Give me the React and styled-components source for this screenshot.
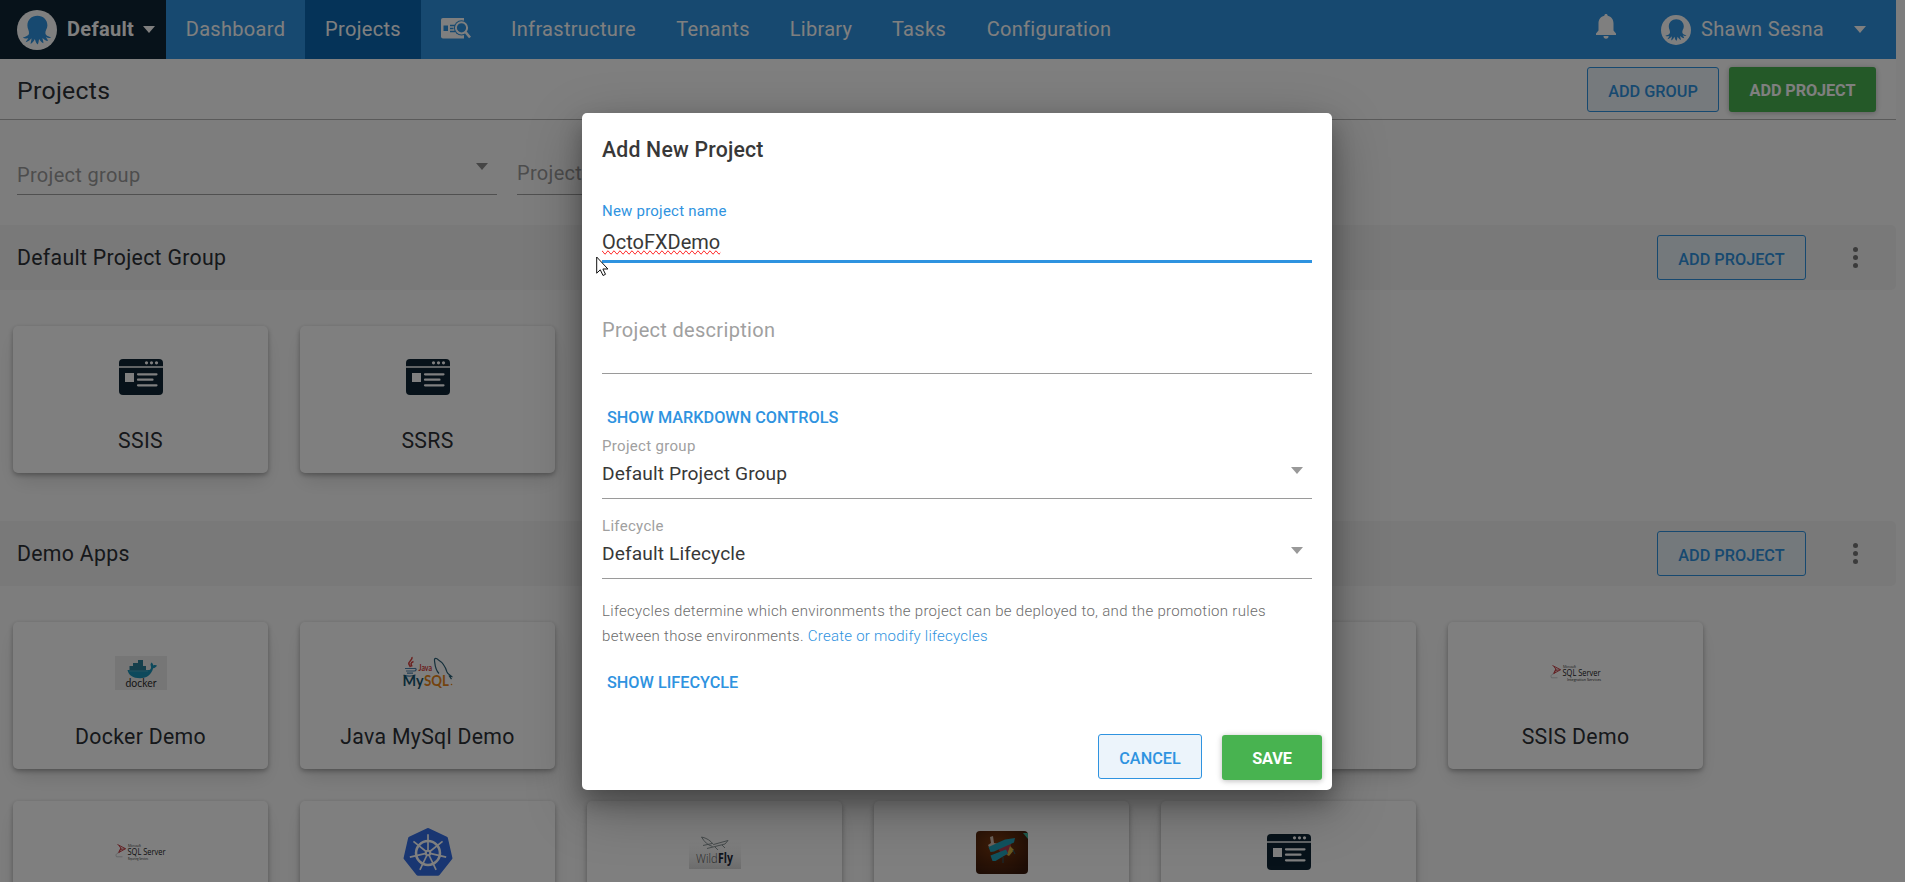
import React from 'react';
import styled, { createGlobalStyle, css } from 'styled-components';

const blue = '#2f93e0';
const green = '#48b350';
const navy = '#0f2535';

const GlobalStyle = createGlobalStyle`
  * { box-sizing: border-box; }
  body {
    margin: 0;
    background: #fbfbfb;
    color: #2c3036;
    font-family: Roboto, "Liberation Sans", sans-serif;
    letter-spacing: 0.31px;
    overflow: hidden;
  }
`;

const Screen = styled.div`
  position: relative;
  height: 882px;
  overflow: hidden;
`;

const Page = styled.div`
  width: 1896px;
  height: 882px;
  overflow: hidden;
`;

/* ---------- navigation ---------- */

const NavBar = styled.nav`
  display: flex;
  height: 59px;
  background: ${blue};
  color: #fff;
  font-size: 20px;
  font-weight: 450;
  box-shadow: 0 1px 0 rgba(47, 110, 160, 0.5);
`;

const SpaceSwitcher = styled.div`
  display: flex;
  align-items: center;
  width: 166px;
  padding-left: 17px;
  background: ${navy};
`;

const SpaceName = styled.span`
  margin: 0 9px 1px 10px;
  font-weight: 700;
`;

const NavItem = styled.a`
  display: flex;
  align-items: center;
  justify-content: center;
  width: ${(p) => p.$width}px;
  padding-bottom: 2px;
  background: ${(p) => (p.$active ? '#0a67b1' : 'transparent')};
`;

const NavEnd = styled.div`
  display: flex;
  align-items: center;
  margin-left: auto;
  padding-right: 30px;
`;

const UserName = styled.span`
  margin: 0 30px 2px 10px;
`;

const BellWrap = styled.span`
  display: flex;
  margin: 0 45px 6px 0;
`;

const Caret = styled.span`
  width: 0;
  height: 0;
  border: 6.5px solid transparent;
  border-top: 7px solid ${(p) => p.$color || '#fff'};
  border-bottom: 0;
`;

/* ---------- buttons ---------- */

const Button = styled.button`
  width: ${(p) => p.$width}px;
  height: 45px;
  padding: 4px 0 0;
  border: 1px solid ${blue};
  border-radius: 3px;
  background: ${(p) => p.$tint || '#ecf4fb'};
  color: ${blue};
  font: 500 16.25px Roboto, sans-serif;
  letter-spacing: 0;
  ${(p) =>
    p.$filled &&
    css`
      padding-top: 2px;
      border: 0;
      background: ${green};
      color: #fff;
      font-weight: 700;
      letter-spacing: -0.1px;
      box-shadow: 0 1px 7px rgba(0, 0, 0, 0.14), 0 1px 5px rgba(0, 0, 0, 0.14);
    `}
`;

/* ---------- page content ---------- */

const PageHeader = styled.header`
  display: flex;
  align-items: center;
  gap: 10px;
  height: 61px;
  padding: 0 20px 0 17px;
  border-bottom: 1px solid #b4b4b4;
  background: #fff;
`;

const PageTitle = styled.h1`
  margin: 0 auto 0 0;
  padding-top: 2px;
  font-size: 24.8px;
  font-weight: 400;
`;

const Filters = styled.div`
  display: flex;
  gap: 20px;
  height: 105px;
  padding: 0 17px;
`;

const FilterField = styled.div`
  display: flex;
  justify-content: space-between;
  align-items: flex-start;
  width: 480px;
  height: 75px;
  padding: ${(p) => p.$top}px 9px 0 0;
  border-bottom: 1px solid #a0a0a0;
  color: #9b9b9b;
  font-size: 20px;
  line-height: 26px;
`;

const FilterCaret = styled(Caret)`
  margin-top: 1px;
`;

const GroupHeader = styled.div`
  display: flex;
  align-items: center;
  height: 65px;
  padding: 0 38px 0 17px;
  border-radius: 0 5px 5px 0;
  background: #f2f2f2;
`;

const GroupName = styled.h2`
  margin: 0 auto 0 0;
  font-size: 21.25px;
  font-weight: 400;
`;

const Dots = styled.span`
  display: grid;
  gap: 2.6px;
  margin-left: 47px;
  i {
    width: 5px;
    height: 5px;
    border-radius: 50%;
    background: #777;
  }
`;

const CardGrid = styled.div`
  display: grid;
  grid-template-columns: repeat(6, 255px);
  gap: 32px;
  padding: 36px 13px 48px;
`;

const Card = styled.div`
  height: 147px;
  border-radius: 5px;
  background: #fff;
  box-shadow: 0 2px 5px rgba(0, 0, 0, 0.3), 0 10px 20px -4px rgba(0, 0, 0, 0.14);
`;

const CardIcon = styled.div`
  display: flex;
  align-items: center;
  justify-content: center;
  height: 102px;
  svg { overflow: visible; }
`;

const CardTitle = styled.div`
  font-size: 21.25px;
  line-height: 26px;
  text-align: center;
`;

/* ---------- dialog ---------- */

const Overlay = styled.div`
  position: absolute;
  inset: 0;
  display: flex;
  align-items: flex-start;
  padding: 113px 0 0 582px;
  background: rgba(0, 0, 0, 0.5);
`;

const Dialog = styled.section`
  width: 750px;
  height: 677px;
  padding: 24px 20px 0;
  border-radius: 5px;
  background: #fff;
  color: #383838;
  box-shadow: 0 17px 56px rgba(0, 0, 0, 0.3), 0 12px 22px rgba(0, 0, 0, 0.26);
`;

const DialogTitle = styled.h3`
  margin: 0 0 39px;
  font-size: 21.25px;
  font-weight: 500;
  line-height: 25px;
  letter-spacing: 0.2px;
`;

const FieldLabel = styled.div`
  color: ${(p) => (p.$focused ? blue : '#a0a0a0')};
  font-size: 15px;
  line-height: 20px;
  letter-spacing: ${(p) => (p.$focused ? 0.22 : 0.31)}px;
`;

const NameInput = styled.div`
  height: 42px;
  padding-top: 8px;
  border-bottom: 3px solid ${blue};
  font-size: 20px;
  line-height: 26px;
  letter-spacing: 0;
`;

const Misspelled = styled.span`
  text-decoration: spelling-error;
`;

const DescriptionInput = styled.div`
  height: 111px;
  padding-top: 54px;
  border-bottom: 1px solid #9a9a9a;
  color: #a0a0a0;
  font-size: 20px;
  line-height: 26px;
`;

const TextButton = styled.div`
  margin: ${(p) => p.$margin};
  padding-left: 5px;
  color: ${blue};
  font-size: 16.25px;
  font-weight: 500;
  line-height: 20px;
  letter-spacing: 0;
`;

const Select = styled.div`
  height: 63px;
  margin-bottom: 17px;
  border-bottom: 1px solid #9a9a9a;
`;

const SelectValue = styled.div`
  display: flex;
  justify-content: space-between;
  padding: 5px 9px 0 0;
  font-size: 19.2px;
  line-height: 26px;
  letter-spacing: 0.1px;
`;

const SelectCaret = styled(Caret)`
  margin-top: 6px;
`;

const Help = styled.p`
  margin: 20px 0 24px;
  color: #6c6c6c;
  font-size: 15px;
  font-weight: 300;
  line-height: 25px;
  letter-spacing: 0.305px;
`;

const HelpLink = styled.a`
  color: ${blue};
  font-weight: 350;
  letter-spacing: 0.24px;
`;

const Actions = styled.div`
  display: flex;
  justify-content: flex-end;
  gap: 20px;
  margin: 41px -10px 0 0;
`;

const SaveWrap = styled.div`
  padding-top: 1px;
`;

const Pointer = styled.svg`
  position: absolute;
  left: 596px;
  top: 256px;
`;

/* ---------- drawings ---------- */

const Octopus = ({ size }) => (
  <svg width={size} height={size} viewBox="0 0 40 40">
    <circle cx="20" cy="20" r="20" fill="#fff" />
    <path
      fill={blue}
      d="M20.400 5.700C14.500 5.700 10.400 9.800 10.400 15.400c0 3.200 1.800 5 1.600 7.800-.2 2.600-3.800 3.600-6.200 4.400 1.600 1.200 3.800 1 5.400.3-.6 1.700-2 2.800-2.600 4.400 2.700-.6 4.500-2.300 5.800-4 .3 2-.8 3.600-.8 5.600 2-.9 3.400-2.900 4.200-4.900.8 1.700 1 4.200 2.800 5.400 1.200-1.500 1-3.600 1.500-5.400 1.200 1.700 2.300 3.500 4.300 4.300.2-1.900-.9-3.300-.9-5.200 1.500 1.400 3.200 2.900 5.400 3 .1-1.700-1.400-2.700-1.900-4.100 1.500.8 3.400 1.400 5 .4-2.200-1-5.200-1.600-5.600-4.200-.4-2.700 2-4.600 2-7.800 0-5.600-4.100-9.700-10-9.700z"
    />
  </svg>
);

const SearchWindow = () => (
  <svg width="30" height="21" viewBox="0 0 30 21">
    <path fill="#fff" d="M2 0h21v20.500H2a2 2 0 0 1-2-2V2a2 2 0 0 1 2-2z" />
    <path fill="none" stroke={blue} strokeWidth="1.500" d="M9 7.500h5M9 10.500h3.500M9 13.500h5" />
    <rect x="2.500" y="7.500" width="4.500" height="5.500" fill={blue} />
    <circle cx="20.500" cy="9.800" r="7.600" fill={blue} />
    <circle cx="20.500" cy="9.800" r="5.600" fill="none" stroke="#fff" strokeWidth="2" />
    <path stroke="#fff" strokeWidth="2.600" d="M24.500 14l4.500 5.500" />
  </svg>
);

const Bell = () => (
  <svg width="20" height="25" viewBox="0 0 20 25">
    <path fill="#fff" d="M10 0c1 0 1.600.7 1.700 1.700C15.500 2.600 17.500 5.500 17.500 9.500V16.500l2.500 3v1.500H0v-1.500l2.500-3V9.500C2.500 5.500 4.500 2.600 8.300 1.700 8.400.7 9 0 10 0z" />
    <path fill="#fff" d="M7.500 22h5a2.500 2.800 0 0 1-5 0z" />
  </svg>
);

const AppWindow = () => (
  <svg width="44" height="36" viewBox="0 0 44 36">
    <rect width="44" height="36" rx="4" fill={navy} />
    <path stroke="#fff" strokeWidth="1.600" d="M0 8h44" />
    <g fill="#fff">
      <circle cx="27.500" cy="3.800" r="1.600" />
      <circle cx="32.500" cy="3.800" r="1.600" />
      <circle cx="37.500" cy="3.800" r="1.600" />
      <rect x="6" y="14" width="9" height="9" />
    </g>
    <path stroke="#fff" strokeWidth="2.200" strokeLinecap="round" d="M19 15.300h18.500M19 20.700h14.500M19 26.300h18.500" />
  </svg>
);

const DockerLogo = () => (
  <svg width="52" height="34" viewBox="0 0 52 34">
    <rect width="52" height="34" fill="#ececec" />
    <path fill="#1b93b8" d="M12.500 14h22c1.500-1 2-2.500 1.200-4.500-.5-1.500.3-2.500 1-3 1 .8 1.400 2 1.600 3 1.200-.6 2.600-.5 3.700.1-.6 1.600-2 2.500-3.900 2.600-1.500 6-6 10-13 10-7.200 0-11.600-3-12.600-8.200z" />
    <path fill="#2a7f98" d="M14.500 14.500V10h3.500V7h5V4h5v6h3v4.500z" />
    <path fill="none" stroke="#6bb6cb" strokeWidth=".6" d="M14 15h19" />
    <text x="10.500" y="30.500" textLength="31" lengthAdjust="spacingAndGlyphs" fontFamily="Lato" fontSize="10.500" letterSpacing="0" fill="#2c2c2c">docker</text>
  </svg>
);

const JavaMySqlLogo = () => (
  <svg width="52" height="34" viewBox="0 0 52 34" fontFamily="Lato" letterSpacing="0">
    <path fill="none" stroke="#d9433f" strokeWidth="1.500" d="M10 1c1 3.500-4.500 4-3 7.500l1.500 2.500M11.500 5.500c-3.500 1.500-2.500 3-1.500 5" />
    <path fill="none" stroke="#4c84b0" strokeWidth="1.200" d="M3 12.500h9.500c2.500-.5 2 2.500-.5 2.500M4 15h8M5 17.200h6M1.500 19c4 1.500 9 1.200 12-.2" />
    <text x="16.500" y="14.500" fontSize="8.500" fontWeight="700" textLength="13.500" lengthAdjust="spacingAndGlyphs" fill="#d33c37">Java</text>
    <path fill="none" stroke="#2b6078" strokeWidth="1.200" d="M37 17.500c-4-4-4-9-4.500-13-.3-3 2-2.500 4-.5 5 3 7 7 8.500 12 .7 2 2.500 2.500 4.500 4.500l-2-.3 2 3" />
    <text x="0.500" y="29.500" fontSize="14.500" fontWeight="700" textLength="21" lengthAdjust="spacingAndGlyphs" fill="#16556f">My</text>
    <text x="22" y="29.500" fontSize="14.500" fontWeight="700" textLength="25" lengthAdjust="spacingAndGlyphs" fill="#e8861b">SQL</text>
    <circle cx="49.500" cy="28.500" r=".8" fill="#e8861b" />
  </svg>
);

const SqlServerLogo = ({ caption, indent, length }) => (
  <svg width="52" height="19" viewBox="0 0 52 19" fontFamily="Open Sans" letterSpacing="0">
    <path fill="none" stroke="#c8444a" strokeWidth="1" d="M2.500 1.500l8 4.200-7 4 2.500-5M10.500 5.700L5 6.500M4 2.500l2 3-2 4" />
    <path fill="none" stroke="#b9bcc0" strokeWidth=".8" d="M3.500 9.700C1 10.500.5 12.500 1.500 13.800h6" />
    <text x="13" y="4" fontSize="3.600" textLength="13" fill="#555">Microsoft</text>
    <text x="12.500" y="12.200" fontSize="9" textLength="38" lengthAdjust="spacingAndGlyphs" fill="#222">SQL Server</text>
    <text x={indent} y="17" fontSize="3.800" textLength={length} lengthAdjust="spacingAndGlyphs" fill="#222">{caption}</text>
  </svg>
);

const polar = (r, deg) => {
  const a = ((deg - 90) * Math.PI) / 180;
  return [26 + r * Math.cos(a), 26.5 + r * Math.sin(a)];
};

const spokes = Array.from({ length: 7 }, (_, i) => (i * 360) / 7);

const KubernetesLogo = () => (
  <svg width="52" height="51" viewBox="0 0 52 52">
    <polygon
      points={spokes.map((d) => polar(23.5, d).join(',')).join(' ')}
      fill="#326ce5"
      stroke="#326ce5"
      strokeWidth="4"
      strokeLinejoin="round"
    />
    <g stroke="#fff" fill="none">
      <circle cx="26" cy="26.500" r="12.200" strokeWidth="2.600" />
      {spokes.map((d) => {
        const [x1, y1] = polar(2, d);
        const [x2, y2] = polar(19, d);
        return <line key={d} x1={x1} y1={y1} x2={x2} y2={y2} strokeWidth="1.700" />;
      })}
    </g>
    <circle cx="26" cy="26.500" r="3.300" fill="#fff" />
    <circle cx="26" cy="26.500" r="1.200" fill="#326ce5" />
  </svg>
);

const WildFlyLogo = () => (
  <svg width="52" height="33" viewBox="0 0 52 33" fontFamily="Open Sans" letterSpacing="0">
    <defs>
      <linearGradient id="sheet" x1="0" y1="0" x2="0" y2="1">
        <stop offset="0" stopColor="#fff" stopOpacity="0" />
        <stop offset="1" stopColor="#d8d8d8" />
      </linearGradient>
    </defs>
    <rect width="52" height="33" fill="url(#sheet)" />
    <path fill="none" stroke="#7e8a8c" strokeWidth=".9" d="M12.500 1c5 1 9 3.500 12 7.500L39 4.500l-3 3.500-12 3M12.500 1c3 5 6 8 11 9.500M14 9.500l9-2M24 11l-6 1.500M33 9l3 3M26 11l3 3" />
    <text x="7" y="27" fontSize="13.500" fontWeight="300" textLength="21.500" lengthAdjust="spacingAndGlyphs" fill="#555">Wild</text>
    <text x="29" y="27" fontSize="13.500" fontWeight="700" textLength="15" lengthAdjust="spacingAndGlyphs" fill="#1f2a3a">Fly</text>
  </svg>
);

const BiplanePhoto = () => (
  <svg width="52" height="43" viewBox="0 0 52 43">
    <defs>
      <radialGradient id="wood" cx=".4" cy=".3" r=".8">
        <stop offset="0" stopColor="#7c3a12" />
        <stop offset="1" stopColor="#38180a" />
      </radialGradient>
      <clipPath id="photo"><rect width="52" height="43" rx="4" /></clipPath>
    </defs>
    <g clipPath="url(#photo)">
      <rect width="52" height="43" fill="url(#wood)" />
      <path fill="#3fb59b" d="M47 2h5v6z" />
      <path fill="#d8c3b4" d="M14 6l3-1 1 7 5 1-9 5-2-4 3-2z" />
      <path fill="#b03a50" d="M22 17l13-5-1 11-8 2z" />
      <path fill="#d3b140" d="M34 15l4 4-5 6-2-1z" />
      <path fill="#22a5bd" d="M12.500 16L29 8.500l10-1.500-1 4.500L18 20.500l-3.500.5zM14.500 24.500L30 18.500l2 4-12.500 7.500-3 0z" />
      <path stroke="#2a5f70" strokeWidth="1" d="M27 26v6M37 19l2 4" />
    </g>
  </svg>
);

/* ---------- data ---------- */

const navItems = [
  ['Dashboard', 139],
  ['Projects', 116],
  [<SearchWindow key="s" />, 70],
  ['Infrastructure', 165],
  ['Tenants', 114],
  ['Library', 102],
  ['Tasks', 94],
  ['Configuration', 166],
];

const groups = [
  {
    name: 'Default Project Group',
    projects: [
      { title: 'SSIS', icon: <AppWindow /> },
      { title: 'SSRS', icon: <AppWindow /> },
    ],
  },
  {
    name: 'Demo Apps',
    projects: [
      { title: 'Docker Demo', icon: <DockerLogo /> },
      { title: 'Java MySql Demo', icon: <JavaMySqlLogo /> },
      {},
      {},
      {},
      { title: 'SSIS Demo', icon: <SqlServerLogo caption="Integration Services" indent={17} length={34} /> },
      { icon: <SqlServerLogo caption="Reporting Services" indent={13} length={20} /> },
      { icon: <KubernetesLogo /> },
      { icon: <WildFlyLogo /> },
      { icon: <BiplanePhoto /> },
      { icon: <AppWindow /> },
    ],
  },
];

const ProjectGroup = ({ name, projects }) => (
  <section>
    <GroupHeader>
      <GroupName>{name}</GroupName>
      <Button $width={149} $tint="#e9f2f8">ADD PROJECT</Button>
      <Dots><i /><i /><i /></Dots>
    </GroupHeader>
    <CardGrid>
      {projects.map((p, i) => (
        <Card key={i}>
          <CardIcon>{p.icon}</CardIcon>
          <CardTitle>{p.title}</CardTitle>
        </Card>
      ))}
    </CardGrid>
  </section>
);

const SelectField = ({ label, value }) => (
  <Select>
    <FieldLabel>{label}</FieldLabel>
    <SelectValue>
      {value}
      <SelectCaret $color="#999" />
    </SelectValue>
  </Select>
);

export default function App() {
  return (
    <Screen>
      <GlobalStyle />
      <Page>
        <NavBar>
          <SpaceSwitcher>
            <Octopus size={40} />
            <SpaceName>Default</SpaceName>
            <Caret />
          </SpaceSwitcher>
          {navItems.map(([label, width], i) => (
            <NavItem key={i} $width={width} $active={label === 'Projects'}>{label}</NavItem>
          ))}
          <NavEnd>
            <BellWrap><Bell /></BellWrap>
            <Octopus size={30} />
            <UserName>Shawn Sesna</UserName>
            <Caret />
          </NavEnd>
        </NavBar>
        <PageHeader>
          <PageTitle>Projects</PageTitle>
          <Button $width={132}>ADD GROUP</Button>
          <Button $width={147} $filled>ADD PROJECT</Button>
        </PageHeader>
        <Filters>
          <FilterField $top={42}>
            Project group
            <FilterCaret $color="#8a8a8a" />
          </FilterField>
          <FilterField $top={40}>Project name</FilterField>
        </Filters>
        {groups.map((g) => (
          <ProjectGroup key={g.name} {...g} />
        ))}
      </Page>
      <Overlay>
        <Dialog>
          <DialogTitle>Add New Project</DialogTitle>
          <FieldLabel $focused>New project name</FieldLabel>
          <NameInput><Misspelled>OctoFXDemo</Misspelled></NameInput>
          <DescriptionInput>Project description</DescriptionInput>
          <TextButton $margin="34px 0 8px">SHOW MARKDOWN CONTROLS</TextButton>
          <SelectField label="Project group" value="Default Project Group" />
          <SelectField label="Lifecycle" value="Default Lifecycle" />
          <Help>
            Lifecycles determine which environments the project can be deployed to, and the promotion rules
            <br />
            between those environments. <HelpLink>Create or modify lifecycles</HelpLink>
          </Help>
          <TextButton $margin="0">SHOW LIFECYCLE</TextButton>
          <Actions>
            <Button $width={104}>CANCEL</Button>
            <SaveWrap><Button $width={100} $filled>SAVE</Button></SaveWrap>
          </Actions>
        </Dialog>
      </Overlay>
      <Pointer width="14" height="21" viewBox="0 0 14 21">
        <path fill="#fff" stroke="#111" strokeWidth="1" d="M.7 1v16.200l3.600-3.400 2.700 5.700 2.500-1.200-2.600-5.300h5z" />
      </Pointer>
    </Screen>
  );
}
